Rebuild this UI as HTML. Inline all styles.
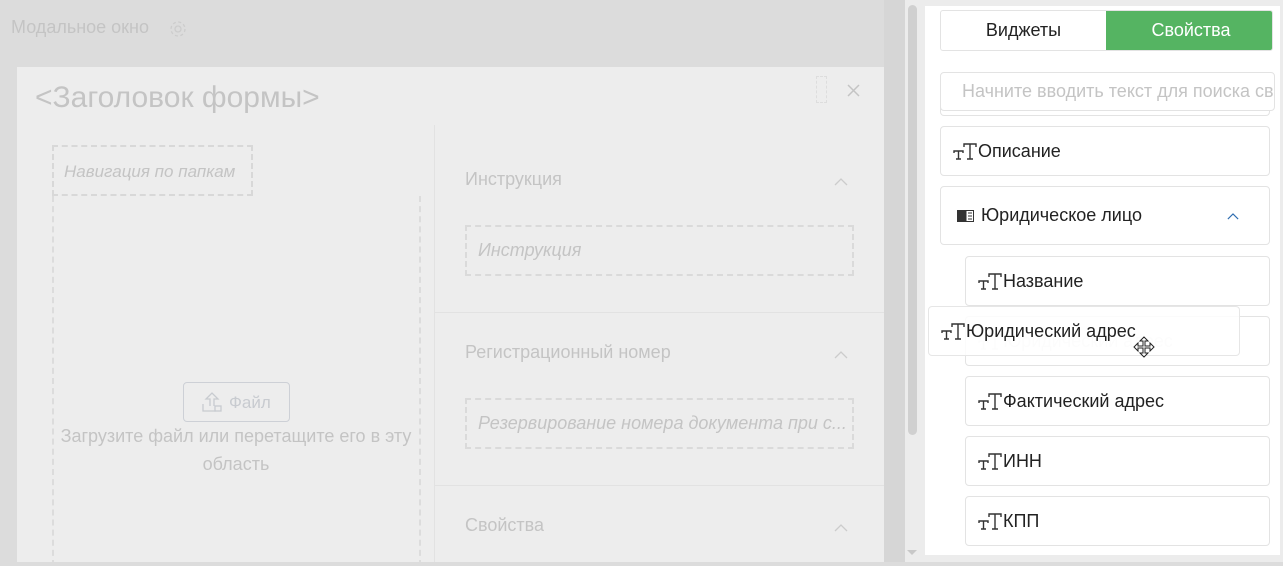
<!DOCTYPE html><html><head><meta charset="utf-8"><style>
*{box-sizing:border-box;margin:0;padding:0}
body{width:1283px;height:562px;overflow:hidden;background:#dcdcdc;font-family:"Liberation Sans",sans-serif;position:relative}
.a{position:absolute}
.g{color:#c4c4c4}
.card{position:absolute;background:#fff;border:1px solid #e3e3e3;border-radius:4px;font-size:18px;color:#222;display:flex;align-items:center;padding-left:12px}
.tt{width:25px;height:18px;margin-right:0;flex:none}
.ch{position:absolute}
</style></head><body>
<svg width="0" height="0" style="position:absolute"><defs><symbol id="tt" viewBox="0 0 25 18"><g fill="none" stroke="currentColor" stroke-width="1.4"><path d="M1 11V9h9v2M5.5 9v8M3 17h5"/><path d="M11 5V2h12v3M17 2v15M14 17h6"/></g></symbol>
<symbol id="up" viewBox="0 0 14 8"><path d="M1 7l6-6 6 6" fill="none" stroke="currentColor" stroke-width="1.3"/></symbol></defs></svg>
<div class="a g" style="left:11px;top:17px;font-size:18px">Модальное окно</div>
<svg class="a" style="left:168px;top:19px" width="20" height="20" viewBox="0 0 20 20"><circle cx="10" cy="10" r="3" fill="none" stroke="#ccc" stroke-width="1.3"/><circle cx="10" cy="10" r="7" fill="none" stroke="#ccc" stroke-width="1.3" stroke-dasharray="3 2.5"/></svg>
<div class="a" style="left:17px;top:67px;width:867px;height:495px;background:#ededed"></div>
<div class="a g" style="left:35px;top:81px;font-size:30px">&lt;Заголовок формы&gt;</div>
<div class="a" style="left:816px;top:76px;width:11px;height:27px;border:1px dashed #ddd"></div>
<svg class="a" style="left:847px;top:84px" width="13" height="13" viewBox="0 0 13 13"><path d="M1 1l11 11M12 1L1 12" stroke="#c4c4c4" stroke-width="1.5"/></svg>
<div class="a" style="left:434px;top:125px;width:1px;height:437px;background:#e2e2e2"></div>
<div class="a" style="left:435px;top:312px;width:449px;height:1px;background:#e2e2e2"></div>
<div class="a" style="left:435px;top:485px;width:449px;height:1px;background:#e2e2e2"></div>
<div class="a g" style="left:52px;top:145px;width:201px;height:51px;border:2px dashed #d8d8d8;font-style:italic;font-size:17px;padding:15px 0 0 10px;white-space:nowrap">Навигация по папкам</div>
<div class="a" style="left:52px;top:196px;width:369px;height:370px;border:2px dashed #dcdcdc;border-top:none"></div>
<div class="a g" style="left:183px;top:382px;width:107px;height:40px;border:1px solid #cdd0d6;border-radius:4px;font-size:17px;padding:10px 0 0 45px;color:#c8cbd0">Файл</div>
<svg class="a" style="left:200px;top:390px" width="24" height="24" viewBox="0 0 24 24" fill="none" stroke="#c8cbd0" stroke-width="1.3"><path d="M10 16V9H6l6-6 6 6h-4v7M3 14v7h13"/><rect x="15" y="16" width="6" height="5"/></svg>
<div class="a g" style="left:56px;top:422px;width:360px;text-align:center;font-size:18px;line-height:28px">Загрузите файл или перетащите его в эту область</div>
<div class="a g" style="left:465px;top:169px;font-size:18px">Инструкция</div>
<svg class="a ch" style="left:834px;top:178px;color:#ccc" width="14" height="8"><use href="#up"/></svg>
<div class="a g" style="left:465px;top:225px;width:389px;height:51px;border:2px dashed #dadada;font-style:italic;font-size:18px;padding:13px 0 0 11px">Инструкция</div>
<div class="a g" style="left:465px;top:342px;font-size:18px">Регистрационный номер</div>
<svg class="a ch" style="left:834px;top:351px;color:#ccc" width="14" height="8"><use href="#up"/></svg>
<div class="a g" style="left:465px;top:398px;width:389px;height:51px;border:2px dashed #dadada;font-style:italic;font-size:18px;padding:13px 0 0 11px;white-space:nowrap;overflow:hidden">Резервирование номера документа при с...</div>
<div class="a g" style="left:465px;top:515px;font-size:18px">Свойства</div>
<svg class="a ch" style="left:834px;top:524px;color:#ccc" width="14" height="8"><use href="#up"/></svg>
<div class="a" style="left:884px;top:0;width:21px;height:562px;background:#d6d6d6"></div>
<div class="a" style="left:905px;top:0;width:378px;height:562px;background:#ececec"></div>
<div class="a" style="left:908px;top:5px;width:9px;height:430px;background:#d0d0d0;border-radius:5px"></div>
<div class="a" style="left:907px;top:550px;width:0;height:0;border:5px solid transparent;border-top:5px solid #c8c8c8"></div>
<div class="a" style="left:925px;top:6px;width:355px;height:549px;background:#fff"></div>
<div class="a" style="left:940px;top:10px;width:333px;height:41px;border:1px solid #e3e3e3;border-radius:3px;overflow:hidden">
<div class="a" style="left:0;top:0;width:165px;height:41px;text-align:center;line-height:39px;font-size:18px;color:#222">Виджеты</div>
<div class="a" style="left:165px;top:-1px;width:170px;height:41px;background:#55b462;color:#fff;text-align:center;line-height:41px;font-size:18px">Свойства</div></div>
<div class="a" style="left:940px;top:107px;width:330px;height:9px;border:1px solid #e3e3e3;border-top:none;border-radius:0 0 4px 4px"></div>
<div class="a" style="left:940px;top:72px;width:335px;height:39px;border:1px solid #e3e3e3;border-radius:4px;background:#fff;font-size:18px;color:#c4c4c4;padding:8px 0 0 21px;white-space:nowrap;overflow:hidden">Начните вводить текст для поиска сво</div>
<div class="card" style="left:940px;top:126px;width:330px;height:50px"><svg class="tt" style="color:#333"><use href="#tt"/></svg>Описание</div>
<div class="card" style="left:940px;top:186px;width:330px;height:59px;padding-left:16px"><svg width="18" height="12" viewBox="0 0 18 12" style="margin-right:6px"><rect x="0" y="0" width="9" height="12" fill="#333"/><rect x="9" y="0.5" width="7.5" height="11" fill="none" stroke="#333"/><path d="M11 3h4M11 6h4M11 9h4" stroke="#333"/></svg>Юридическое лицо<svg style="position:absolute;left:286px;top:26px;color:#2f6db0" width="12" height="7" viewBox="0 0 14 8"><use href="#up"/></svg></div>
<div class="card" style="left:965px;top:256px;width:305px;height:50px"><svg class="tt" style="color:#333"><use href="#tt"/></svg>Название</div>
<div class="card" style="left:965px;top:316px;width:305px;height:50px;color:#e8e8e8"><svg class="tt" style="color:#e8e8e8"><use href="#tt"/></svg>Юридический адрес</div>
<div class="card" style="left:928px;top:306px;width:312px;height:50px;background:rgba(255,255,255,.85);border-color:#e6e6e6"><svg class="tt" style="color:#333"><use href="#tt"/></svg>Юридический адрес</div>
<svg class="a" style="left:1132px;top:336px" width="24" height="22" viewBox="0 0 24 22"><path d="M12 1l4 4h-3v5h5V7l4 4-4 4v-3h-5v5h3l-4 4-4-4h3v-5H6v3l-4-4 4-4v3h5V5H8z" fill="#fff" stroke="#222" stroke-width="1"/></svg>
<div class="card" style="left:965px;top:376px;width:305px;height:50px"><svg class="tt" style="color:#333"><use href="#tt"/></svg>Фактический адрес</div>
<div class="card" style="left:965px;top:436px;width:305px;height:50px"><svg class="tt" style="color:#333"><use href="#tt"/></svg>ИНН</div>
<div class="card" style="left:965px;top:496px;width:305px;height:50px"><svg class="tt" style="color:#333"><use href="#tt"/></svg>КПП</div>
</body></html>
